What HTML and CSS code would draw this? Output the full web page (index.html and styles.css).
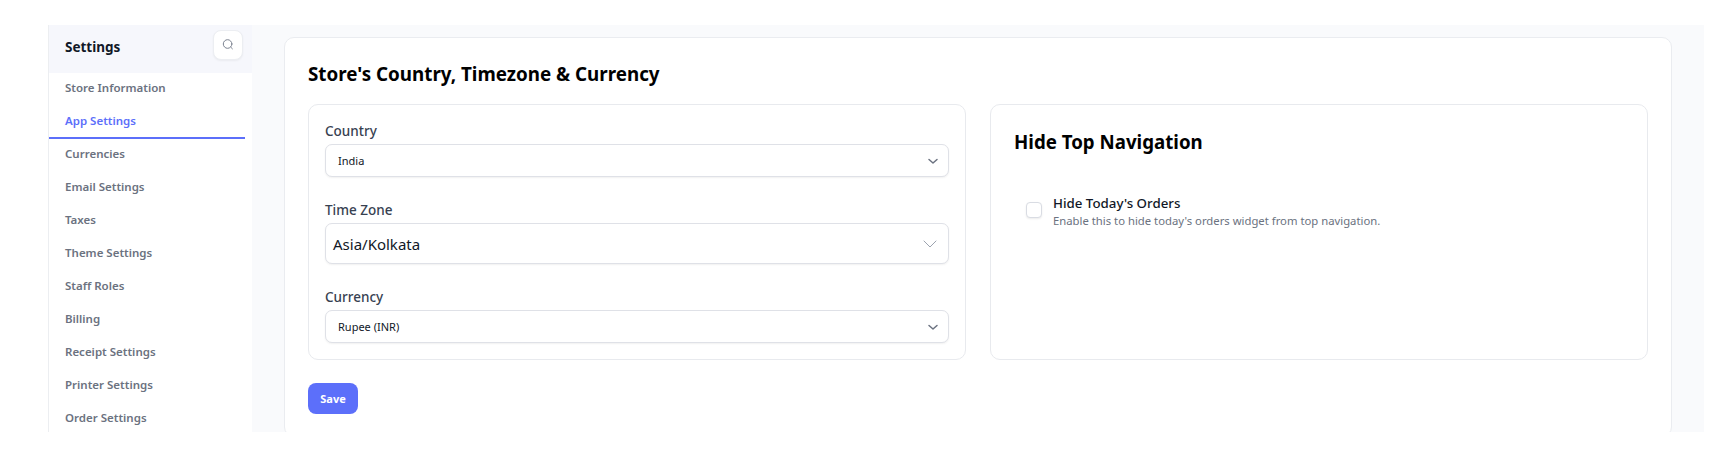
FILE: index.html
```html
<!DOCTYPE html>
<html lang="en">
<head>
    <meta charset="UTF-8">
    <meta name="viewport" content="width=device-width, initial-scale=1.0">
    <title>App Settings</title>
    <link rel="stylesheet" href="styles.css">
</head>
<body>
    <div class="app-frame">
        <aside class="sidebar">
            <div class="sidebar-head">
                <span class="sidebar-title">Settings</span>
                <button class="search-btn" aria-label="Search">
                    <svg width="14" height="14" viewBox="0 0 14 14" fill="none" stroke="#7b8290" stroke-width="1" stroke-linecap="round">
                        <circle cx="6.6" cy="6" r="4.3"/>
                        <path d="M9.8 9.2l1.6 1.6"/>
                    </svg>
                </button>
            </div>
            <nav class="sidebar-nav">
                <a class="nav-item">Store Information</a>
                <a class="nav-item active">App Settings</a>
                <a class="nav-item">Currencies</a>
                <a class="nav-item">Email Settings</a>
                <a class="nav-item">Taxes</a>
                <a class="nav-item">Theme Settings</a>
                <a class="nav-item">Staff Roles</a>
                <a class="nav-item">Billing</a>
                <a class="nav-item">Receipt Settings</a>
                <a class="nav-item">Printer Settings</a>
                <a class="nav-item">Order Settings</a>
            </nav>
        </aside>
        <main class="content">
            <section class="main-card">
                <h1 class="page-title">Store's Country, Timezone &amp; Currency</h1>
                <div class="panels">
                    <div class="panel panel-form">
                        <div class="field">
                            <label class="field-label">Country</label>
                            <div class="select-box">
                                <span>India</span>
                                <svg width="12" height="8" viewBox="0 0 12 8" fill="none" stroke="#6b7280" stroke-width="1.5" stroke-linecap="round" stroke-linejoin="round"><path d="M2 2.5l4 3.5 4-3.5"/></svg>
                            </div>
                        </div>
                        <div class="field">
                            <label class="field-label">Time Zone</label>
                            <div class="select-box select-large">
                                <span>Asia/Kolkata</span>
                                <svg width="16" height="10" viewBox="0 0 16 10" fill="none" stroke="#9ca3af" stroke-width="1" stroke-linecap="round" stroke-linejoin="round"><path d="M2 2l6 6 6-6"/></svg>
                            </div>
                        </div>
                        <div class="field">
                            <label class="field-label">Currency</label>
                            <div class="select-box">
                                <span>Rupee (INR)</span>
                                <svg width="12" height="8" viewBox="0 0 12 8" fill="none" stroke="#6b7280" stroke-width="1.5" stroke-linecap="round" stroke-linejoin="round"><path d="M2 2.5l4 3.5 4-3.5"/></svg>
                            </div>
                        </div>
                    </div>
                    <div class="panel panel-toggle">
                        <h2 class="panel-title">Hide Top Navigation</h2>
                        <div class="check-row">
                            <span class="checkbox"></span>
                            <div>
                                <div class="check-label">Hide Today's Orders</div>
                                <div class="check-help">Enable this to hide today's orders widget from top navigation.</div>
                            </div>
                        </div>
                    </div>
                </div>
                <button class="btn-save">Save</button>
            </section>
        </main>
    </div>
</body>
</html>
```

FILE: styles.css
```css
* {
    box-sizing: border-box;
}

html, body {
    height: 100%;
}

body {
    margin: 0;
    background: #fff;
    font-family: "Noto Sans", "Open Sans", sans-serif;
    overflow: hidden;
}

.app-frame {
    display: flex;
    height: 407px;
    margin: 25px 32px 0 48px;
    background: #f9fafc;
    overflow: hidden;
}

.sidebar {
    width: 204px;
    flex-shrink: 0;
    background: #fff;
    border-left: 1px solid #eceef1;
}

.sidebar-head {
    display: flex;
    justify-content: space-between;
    height: 48px;
    padding: 5px 9px 0 16px;
    background: #f6f7fc;
}

.sidebar-title {
    margin-top: 6px;
    font-size: 13.5px;
    line-height: 22px;
    font-weight: 700;
    color: #111827;
}

.search-btn {
    display: flex;
    align-items: center;
    justify-content: center;
    width: 30px;
    height: 30px;
    padding: 0;
    background: #fff;
    border: 1px solid #eceef2;
    border-radius: 8px;
    box-shadow: 0 1px 2px rgba(0, 0, 0, 0.05);
}

.nav-item {
    display: block;
    height: 33px;
    margin-right: 7px;
    padding-left: 16px;
    font-size: 11.5px;
    line-height: 30px;
    font-weight: 600;
    color: #6b7280;
}

.nav-item.active {
    color: #5c6ffa;
    border-bottom: 2px solid #5c6ffa;
}

.content {
    flex: 1;
    padding: 12px 32px 0;
}

.main-card {
    height: 400px;
    padding: 23px 23px 0;
    background: #fff;
    border: 1px solid #eaecf0;
    border-radius: 10px;
}

.page-title {
    margin: 0 0 17px;
    font-size: 18.8px;
    line-height: 26px;
    font-weight: 700;
    color: #000;
}

.panels {
    display: grid;
    grid-template-columns: 1fr 1fr;
    gap: 24px;
}

.panel {
    height: 256px;
    background: #fff;
    border: 1px solid #e8eaee;
    border-radius: 10px;
}

.panel-form {
    padding: 16px 16px 0;
}

.field {
    margin-bottom: 23px;
}

.field-label {
    display: block;
    margin-bottom: 3px;
    font-size: 13.5px;
    line-height: 20px;
    font-weight: 500;
    color: #374151;
}

.select-box {
    display: flex;
    align-items: center;
    justify-content: space-between;
    height: 33px;
    padding: 0 9px 0 12px;
    font-size: 11px;
    color: #111827;
    background: #fff;
    border: 1px solid #dfe1e7;
    border-radius: 7px;
    box-shadow: 0 1px 2px rgba(0, 0, 0, 0.06);
}

.select-large {
    height: 41px;
    padding: 0 10px 0 7px;
    font-size: 15px;
}

.panel-toggle {
    padding: 24px 23px;
}

.panel-title {
    margin: 0 0 40px;
    font-size: 18.7px;
    line-height: 26px;
    font-weight: 700;
    color: #000;
}

.check-row {
    display: flex;
    gap: 11px;
    padding-left: 12px;
}

.checkbox {
    width: 16px;
    height: 16px;
    margin-top: 7px;
    background: #fff;
    border: 1px solid #d9dce3;
    border-radius: 4px;
    box-shadow: 0 1px 2px rgba(0, 0, 0, 0.08);
}

.check-label {
    font-size: 13.3px;
    line-height: 17px;
    font-weight: 500;
    color: #111827;
}

.check-help {
    font-size: 11.3px;
    line-height: 18px;
    color: #6b7280;
}

.btn-save {
    display: block;
    width: 50px;
    height: 31px;
    margin-top: 23px;
    padding: 0;
    font-family: inherit;
    font-size: 11px;
    font-weight: 700;
    color: #fff;
    background: #5c6ffa;
    border: none;
    border-radius: 8px;
}
```
